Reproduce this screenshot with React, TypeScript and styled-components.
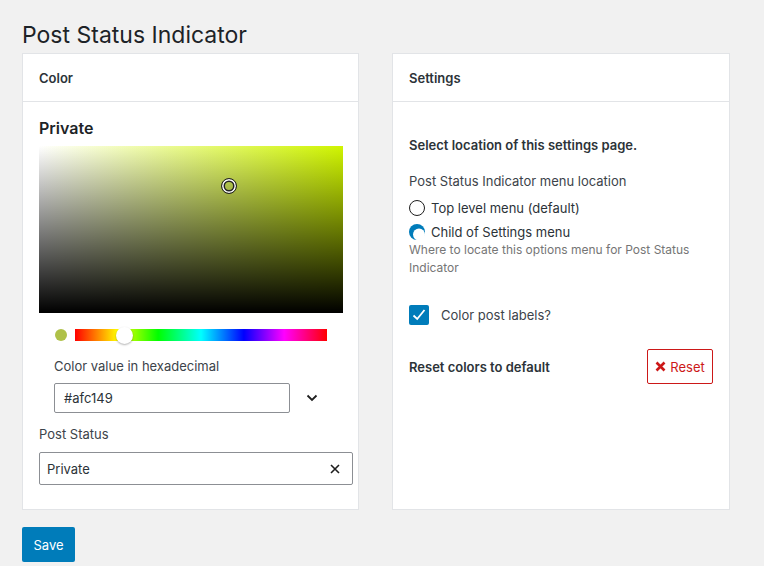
import React from "react";
import styled, { createGlobalStyle } from "styled-components";

const Global = createGlobalStyle`
  html, body { margin: 0; padding: 0; background: #f1f1f1; }
  body { font-family: Inter, "Noto Sans", sans-serif; color: #1e1e1e; -webkit-font-smoothing: antialiased; }
  * { box-sizing: border-box; }
`;

const Page = styled.div`
  padding: 20px 22px 0 22px;
  width: 764px;
  height: 566px;
  overflow: hidden;
`;

const Title = styled.h1`
  margin: 0 0 3px;
  font-size: 23px;
  line-height: 30px;
  font-weight: 400;
  color: #1d2327;
`;

const Columns = styled.div`
  display: grid;
  grid-template-columns: 337px 338px;
  column-gap: 33px;
`;

const Card = styled.section`
  background: #fff;
  border: 1px solid #e2e4e7;
  height: 457px;
  display: flex;
  flex-direction: column;
`;

const CardHeader = styled.div`
  height: 48px;
  border-bottom: 1px solid #e2e4e7;
  padding: 0 16px;
  display: flex;
  align-items: center;
  font-size: 13px;
  font-weight: 600;
  color: #2c3338;
`;

const CardBody = styled.div<{ $top: number }>`
  padding: ${(p) => p.$top}px 16px 0 16px;
  display: flex;
  flex-direction: column;
`;

const StatusName = styled.h2`
  margin: 0;
  font-size: 16px;
  line-height: 20px;
  font-weight: 600;
  color: #1d2327;
`;

const Saturation = styled.div`
  position: relative;
  margin-top: 8px;
  width: 304px;
  height: 167px;
  background: linear-gradient(to top, #000, rgba(0, 0, 0, 0)),
    linear-gradient(to right, #fff, hsl(69, 100%, 48%));
`;

const Pointer = styled.div`
  position: absolute;
  width: 16px;
  height: 16px;
  margin: -8px 0 0 -8px;
  border-radius: 50%;
  border: 1.5px solid #222;
  box-shadow: inset 0 0 0 1.5px #fff, inset 0 0 0 3px #222;
`;

const HueRow = styled.div`
  margin-top: 14px;
  height: 16px;
  padding-left: 16px;
  display: flex;
  align-items: center;
  gap: 8px;
`;

const Swatch = styled.div`
  width: 12px;
  height: 12px;
  border-radius: 50%;
  background: #afc149;
`;

const HueBar = styled.div`
  position: relative;
  width: 252px;
  height: 12px;
  background: linear-gradient(
    to right,
    #f00 0%,
    #ff0 17%,
    #0f0 33%,
    #0ff 50%,
    #00f 67%,
    #f0f 83%,
    #f00 100%
  );
`;

const HueThumb = styled.div`
  position: absolute;
  top: 50%;
  width: 17px;
  height: 17px;
  margin: -8.5px 0 0 -8.5px;
  border-radius: 50%;
  background: #fff;
  box-shadow: 0 1px 2px rgba(0, 0, 0, 0.3);
`;

const HexSection = styled.div`
  padding-left: 15px;
  margin-top: 14px;
  display: flex;
  flex-direction: column;
`;

const Label = styled.div<{ $mt?: number }>`
  font-size: 13px;
  line-height: 18px;
  color: #3c434a;
  margin-top: ${(p) => p.$mt ?? 0}px;
`;

const HexRow = styled.div`
  margin-top: 8px;
  display: flex;
  align-items: center;
`;

const TextBox = styled.div<{ $w: number; $h: number; $pl: number; $mt?: number }>`
  width: ${(p) => p.$w}px;
  height: ${(p) => p.$h}px;
  margin-top: ${(p) => p.$mt ?? 0}px;
  border: 1px solid #8c8f94;
  border-radius: 2px;
  padding: 0 12px 0 ${(p) => p.$pl}px;
  display: flex;
  align-items: center;
  justify-content: space-between;
  font-size: 13px;
  color: #2c3338;
  background: #fff;
`;

const IconBtn = styled.div`
  width: 44px;
  display: flex;
  justify-content: center;
  align-items: center;
`;

const StrongText = styled.div<{ $mt?: number }>`
  font-size: 13px;
  line-height: 18px;
  font-weight: 600;
  color: #2c3338;
  margin-top: ${(p) => p.$mt ?? 0}px;
`;

const RadioGroup = styled.div`
  margin-top: 9px;
  display: flex;
  flex-direction: column;
  gap: 6px;
`;

const RadioRow = styled.label`
  display: flex;
  align-items: center;
  gap: 6px;
  height: 18px;
  font-size: 13px;
  color: #2c3338;
`;

const RadioCircle = styled.span`
  width: 16px;
  height: 16px;
  border-radius: 50%;
  border: 1.5px solid #1e1e1e;
`;

const Help = styled.div`
  font-size: 12px;
  line-height: 18px;
  color: #757575;
  padding-right: 20px;
`;

const CheckRow = styled.label`
  margin-top: 28px;
  display: flex;
  align-items: center;
  gap: 12px;
  font-size: 13px;
  color: #3c434a;
  height: 20px;
`;

const CheckBox = styled.span`
  width: 20px;
  height: 20px;
  border-radius: 2px;
  background: #007cba;
  display: flex;
  align-items: center;
  justify-content: center;
`;

const ResetRow = styled.div`
  margin-top: 24px;
  display: flex;
  align-items: center;
  justify-content: space-between;
`;

const ResetButton = styled.button`
  width: 66px;
  height: 35px;
  border: 1px solid #cc1818;
  border-radius: 2px;
  background: #fff;
  color: #cc1818;
  font-family: inherit;
  font-size: 13px;
  display: flex;
  align-items: center;
  justify-content: center;
  gap: 4px;
  padding: 0;
`;

const SaveButton = styled.button`
  margin-top: 17px;
  width: 53px;
  height: 35px;
  border: none;
  border-radius: 2px;
  background: #007cba;
  color: #fff;
  font-family: inherit;
  font-size: 13px;
  padding: 0;
`;

export default function App() {
  return (
    <Page>
      <Global />
      <Title>Post Status Indicator</Title>
      <Columns>
        <Card>
          <CardHeader>Color</CardHeader>
          <CardBody $top={16}>
            <StatusName>Private</StatusName>
            <Saturation>
              <Pointer style={{ left: "62.5%", top: "24%" }} />
            </Saturation>
            <HueRow>
              <Swatch />
              <HueBar>
                <HueThumb style={{ left: "19.8%" }} />
              </HueBar>
            </HueRow>
            <HexSection>
              <Label>Color value in hexadecimal</Label>
              <HexRow>
                <TextBox $w={236} $h={30} $pl={9}>#afc149</TextBox>
                <IconBtn>
                  <svg width="12" height="8" viewBox="0 0 12 8">
                    <path d="M1.5 1.5 L6 6 L10.5 1.5" fill="none" stroke="#1e1e1e" strokeWidth="1.8" />
                  </svg>
                </IconBtn>
              </HexRow>
            </HexSection>
            <Label $mt={12}>Post Status</Label>
            <TextBox $w={314} $h={33} $pl={7} $mt={9}>
              Private
              <svg width="10" height="10" viewBox="0 0 10 10">
                <path d="M1 1 L9 9 M9 1 L1 9" stroke="#1e1e1e" strokeWidth="1.6" />
              </svg>
            </TextBox>
          </CardBody>
        </Card>
        <Card>
          <CardHeader>Settings</CardHeader>
          <CardBody $top={34}>
            <StrongText>Select location of this settings page.</StrongText>
            <Label $mt={18}>Post Status Indicator menu location</Label>
            <RadioGroup>
              <RadioRow>
                <RadioCircle />
                Top level menu (default)
              </RadioRow>
              <RadioRow>
                <svg width="16" height="16" viewBox="0 0 16 16">
                  <circle cx="8" cy="8" r="8" fill="#007cba" />
                  <circle cx="10" cy="10.5" r="6" fill="#fff" />
                </svg>
                Child of Settings menu
              </RadioRow>
            </RadioGroup>
            <Help>Where to locate this options menu for Post Status Indicator</Help>
            <CheckRow>
              <CheckBox>
                <svg width="16" height="16" viewBox="0 0 16 16">
                  <path d="M2.5 8.5 L6.2 12 L13.5 3" fill="none" stroke="#fff" strokeWidth="1.8" />
                </svg>
              </CheckBox>
              Color post labels?
            </CheckRow>
            <ResetRow>
              <StrongText>Reset colors to default</StrongText>
              <ResetButton>
                <svg width="11" height="11" viewBox="0 0 11 11">
                  <path d="M1.5 1.5 L9.5 9.5 M9.5 1.5 L1.5 9.5" stroke="#cc1818" strokeWidth="2.6" />
                </svg>
                Reset
              </ResetButton>
            </ResetRow>
          </CardBody>
        </Card>
      </Columns>
      <SaveButton>Save</SaveButton>
    </Page>
  );
}
